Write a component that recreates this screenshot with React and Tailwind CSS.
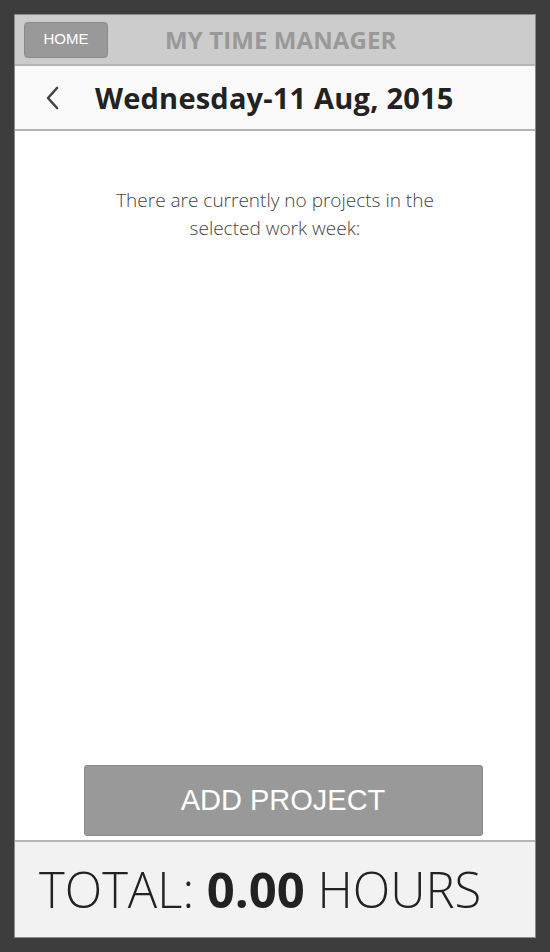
import React from 'react';

// Day view: empty state with add button and totals footer
const App = () => {
  return (
    <div className="h-[952px] w-full bg-[#3d3d3d] p-[14px] font-['Open_Sans',sans-serif]">
      <div className="h-full flex flex-col bg-white border border-[#8a8a8a]">
        {/* Top bar */}
        <div className="h-[51px] shrink-0 flex items-center bg-[#cccccc] border-b-2 border-[#b5b5b5] px-[9px]">
          <button className="w-[84px] h-[36px] rounded-[4px] bg-[#999999] border border-[#8a8a8a] text-white text-[15px] font-['Liberation_Sans',sans-serif]">
            HOME
          </button>
          <h1 className="ml-[57px] text-[24px] font-bold text-[#999999] tracking-[0.1px] leading-none">
            MY TIME MANAGER
          </h1>
        </div>

        {/* Date bar */}
        <div className="h-[65px] shrink-0 flex items-center bg-[#fafafa] border-b-2 border-[#b5b5b5]">
          <svg className="ml-[29px]" width="16" height="24" viewBox="0 0 16 24" fill="none">
            <path d="M13 2 L4 12 L13 22" stroke="#444" strokeWidth="2.6" strokeLinecap="round" strokeLinejoin="round" />
          </svg>
          <h2 className="ml-[35px] text-[29px] font-bold text-[#222222] leading-none tracking-[0.2px]">
            Wednesday-11 Aug, 2015
          </h2>
        </div>

        {/* Content */}
        <div className="flex-1 flex flex-col items-center">
          <p className="mt-[55px] w-[380px] text-center text-[19px] font-light text-[#444444] leading-[28px]">
            There are currently no projects in the selected work week:
          </p>
          <div className="flex-1" />
          <button className="mb-[4px] ml-[16px] w-[399px] h-[71px] rounded-[3px] bg-[#999999] border border-[#8a8a8a] text-white text-[29px] font-['Liberation_Sans',sans-serif]">
            ADD PROJECT
          </button>
        </div>

        {/* Footer totals */}
        <div className="h-[97px] shrink-0 flex items-center bg-[#f2f2f2] border-t-2 border-[#b5b5b5] pl-[24px]">
          <span className="text-[49px] font-light text-[#222222] leading-none">
            TOTAL: <span className="font-bold">0.00</span> HOURS
          </span>
        </div>
      </div>
    </div>
  );
};

export default App;
